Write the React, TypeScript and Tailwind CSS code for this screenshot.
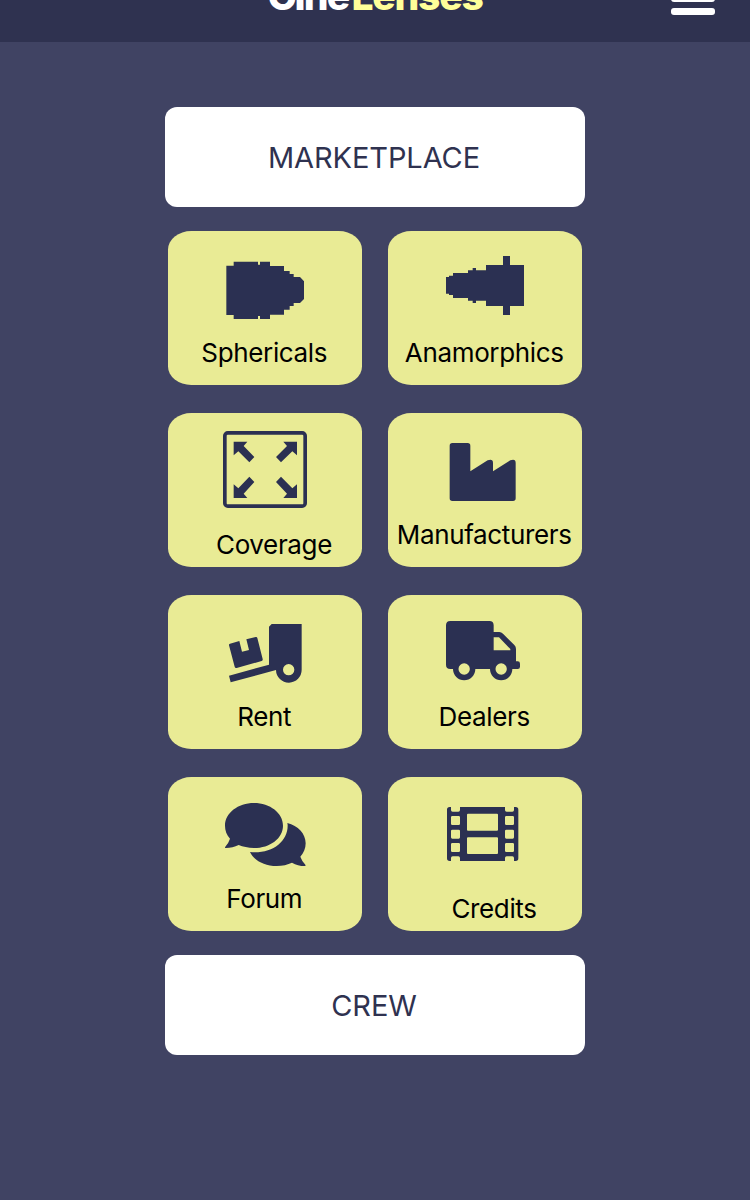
import React from "react"

type Tile = {
  label: string
  icon: React.ReactNode
  viewBox: string
  // some labels sit lower and further right than the others
  shifted?: boolean
}

const tiles: Tile[] = [
  {
    label: "Sphericals",
    viewBox: "189 69 252 240",
    icon: (
      <path d="M199 122H221V110H294V119H300V110H330V123H372V138H389V147H401V156H420L432 169V222L420 234H401V243H389V254H372V269H330V282H300V273H294V282H221V270H199Z" />
    )
  },
  {
    label: "Anamorphics",
    viewBox: "189 69 252 240",
    icon: (
      <path d="M198 156H207V152H219V144H264V136H278V129H288V136H318V120H369V93H390V120H432V243H390V270H369V243H318V227H288V234H278V227H264V219H219V210H207V206H198Z" />
    )
  },
  {
    label: "Coverage",
    viewBox: "189 75 252 240",
    shifted: true,
    icon: (
      <>
        <rect x="194.500" y="83.500" width="241" height="220" rx="9" fill="none" stroke="#2b3052" strokeWidth="11" />
        <path d="M221 110H262L251 123L283 156L268 172L235 139L221 151Z" />
        <path d="M411 110H370L381 123L348 156L363 172L397 139L411 151Z" />
        <path d="M221 279H262L251 266L283 231L268 215L235 250L221 238Z" />
        <path d="M411 279H370L381 266L348 231L363 215L397 250L411 238Z" />
      </>
    )
  },
  {
    label: "Manufacturers",
    viewBox: "189 75 252 240",
    icon: (
      <path d="M217 114H263Q271 114 271 122V199L323 166Q339 160 339 174V199L391 166Q407 160 407 174V280Q407 288 399 288H217Q209 288 209 280V122Q209 114 217 114Z" />
    )
  },
  {
    label: "Rent",
    viewBox: "189 66 252 240",
    icon: (
      <>
        <path d="M210 161L238 153L246 185L267 180L259 148L287 141Q291 140 292 144L308 207Q309 212 305 213L230 234Q225 235 224 230L207 166Q206 162 210 161Z" />
        <path
          fillRule="evenodd"
          d="M335 102H425V239A38.500 38.500 0 0 1 348 240L212 277L207 257L327 224V110ZM386 222A17 17 0 1 0 386 256A17 17 0 1 0 386 222Z"
        />
      </>
    )
  },
  {
    label: "Dealers",
    viewBox: "189 66 252 240",
    icon: (
      <path
        fillRule="evenodd"
        d="M211 93H328Q341 93 341 106V126H358Q364 126 369 131L403 165Q408 170 408 177V214H413Q420 214 420 221V230Q420 237 413 237H397A33.500 33.500 0 0 1 330 237H286A33.500 33.500 0 0 1 219 237H211Q198 237 198 224V106Q198 93 211 93ZM341 142V181H391V177L357 142ZM252.500 220A17 17 0 1 0 252.500 254A17 17 0 1 0 252.500 220ZM363.500 220A17 17 0 1 0 363.500 254A17 17 0 1 0 363.500 220Z"
      />
    )
  },
  {
    label: "Forum",
    viewBox: "189 72 252 240",
    icon: (
      <>
        <path d="M282 99C330 99 369 129 369 167C369 205 330 234 282 234C264 234 249 230 236 225C224 231 211 234 198 234Q193 234 196 230Q206 219 210 206C200 195 195 181 195 167C195 129 234 99 282 99Z" />
        <path d="M382 159C414 167 437 191 437 220C437 235 431 249 421 260Q425 272 436 284Q438 288 434 288C420 288 408 285 396 278C383 284 367 288 350 288C313 288 281 271 270 246C335 252 383 216 383 167Q383 163 382 159Z" />
      </>
    )
  },
  {
    label: "Credits",
    viewBox: "189 72 252 240",
    shifted: true,
    icon: (
      <path
        fillRule="evenodd"
        d="M209 111H213V120Q213 125 218 125H235Q240 125 240 120V111H375V120Q375 125 380 125H397Q402 125 402 120V111H407Q415 111 415 119V265Q415 273 407 273H402V264Q402 259 397 259H380Q375 259 375 264V273H240V264Q240 259 235 259H218Q213 259 213 264V273H209Q201 273 201 265V119Q201 111 209 111ZM264 131Q261 131 261 134V179Q261 182 264 182H351Q354 182 354 179V134Q354 131 351 131ZM264 202Q261 202 261 205V249Q261 252 264 252H351Q354 252 354 249V205Q354 202 351 202ZM217 138Q213 138 213 142V161Q213 165 217 165H236Q240 165 240 161V142Q240 138 236 138ZM217 179Q213 179 213 183V202Q213 206 217 206H236Q240 206 240 202V183Q240 179 236 179ZM217 219Q213 219 213 223V242Q213 246 217 246H236Q240 246 240 242V223Q240 219 236 219ZM379 138Q375 138 375 142V161Q375 165 379 165H398Q402 165 402 161V142Q402 138 398 138ZM379 179Q375 179 375 183V202Q375 206 379 206H398Q402 206 402 202V183Q402 179 398 179ZM379 219Q375 219 375 223V242Q375 246 379 246H398Q402 246 402 242V223Q402 219 398 219Z"
      />
    )
  }
]

function Header() {
  return (
    <header className="flex h-[42px] items-end overflow-hidden bg-[#2f3250]">
      <div className="flex-1" />
      <div className="mb-[30px] flex gap-[3px] text-[39px] leading-[32px] font-extrabold">
        <span className="tracking-[-1.8px] text-white">Cine</span>
        <span className="tracking-[-1.2px] text-[#ffff99]">Lenses</span>
      </div>
      <div className="flex flex-1 justify-end">
        <button aria-label="Menu" className="mr-[35px] mb-[27px] flex w-11 flex-col gap-[6.500px]">
          <span className="h-[7px] rounded-[3px] bg-white" />
          <span className="h-[7px] rounded-[3px] bg-white" />
          <span className="h-[7px] rounded-[3px] bg-white" />
        </button>
      </div>
    </header>
  )
}

function WideButton({ label }: { label: string }) {
  return (
    <button className="h-[100px] w-[420px] rounded-xl bg-white pt-[2px] pr-[2px] text-[29px] tracking-[-0.1px] text-[#2f3250]">
      {label}
    </button>
  )
}

function TileButton({ label, icon, viewBox, shifted }: Tile) {
  return (
    <button className="flex h-[154px] w-[194px] flex-col items-center rounded-[12%] bg-[#e9eb95] pt-[17px] text-[26px] leading-8 tracking-[-0.35px] text-black">
      <svg viewBox={viewBox} className="h-20 w-[84px] shrink-0 fill-[#2b3052]">
        {icon}
      </svg>
      <span className={shifted ? "pt-[19px] pl-[18px]" : "pt-[9px] pr-[1.5px]"}>{label}</span>
    </button>
  )
}

export default function App() {
  return (
    <div className="min-h-[1200px] bg-[#404363] font-[Inter,sans-serif]">
      <Header />
      <main className="flex flex-col items-center pt-[65px]">
        <WideButton label="MARKETPLACE" />
        <div className="my-6 grid grid-cols-2 gap-x-[26px] gap-y-7">
          {tiles.map((tile) => (
            <TileButton key={tile.label} {...tile} />
          ))}
        </div>
        <WideButton label="CREW" />
      </main>
    </div>
  )
}
